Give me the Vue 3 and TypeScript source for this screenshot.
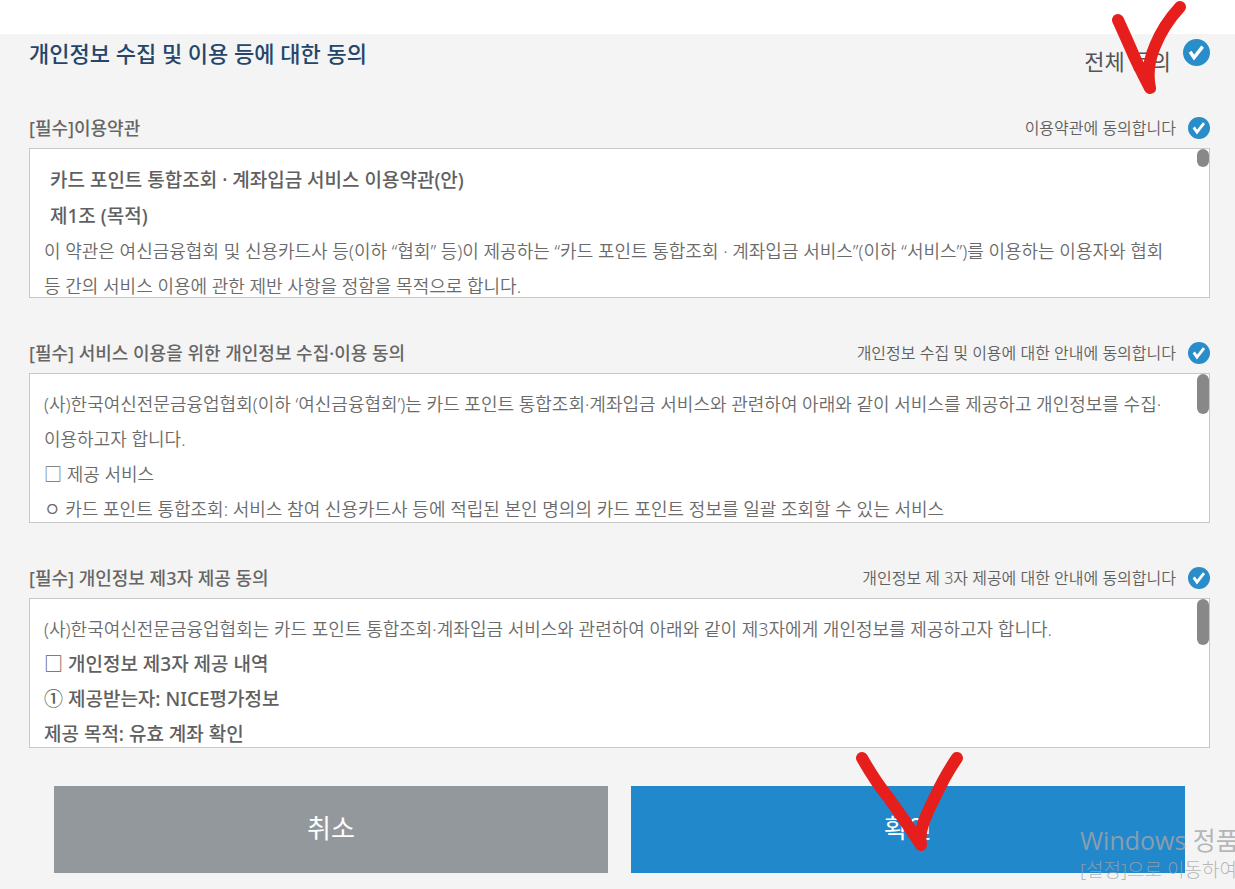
<script setup lang="ts">
import { computed, ref } from 'vue'

interface Line {
  text: string
  kind?: 'strong' | 'heading'
}

interface Section {
  id: string
  title: string
  consent: string
  thumb: number
  agreed: boolean
  lines: Line[]
}

const sections = ref<Section[]>([
  {
    id: 'terms',
    title: '[필수]이용약관',
    consent: '이용약관에 동의합니다',
    thumb: 18,
    agreed: true,
    lines: [
      { text: '카드 포인트 통합조회 · 계좌입금 서비스 이용약관(안)', kind: 'heading' },
      { text: '제1조 (목적)', kind: 'heading' },
      {
        text: '이 약관은 여신금융협회 및 신용카드사 등(이하 “협회” 등)이 제공하는 “카드 포인트 통합조회 · 계좌입금 서비스”(이하 “서비스”)를 이용하는 이용자와 협회 등 간의 서비스 이용에 관한 제반 사항을 정함을 목적으로 합니다.',
      },
    ],
  },
  {
    id: 'collect',
    title: '[필수] 서비스 이용을 위한 개인정보 수집·이용 동의',
    consent: '개인정보 수집 및 이용에 대한 안내에 동의합니다',
    thumb: 40,
    agreed: true,
    lines: [
      {
        text: '(사)한국여신전문금융업협회(이하 ‘여신금융협회’)는 카드 포인트 통합조회·계좌입금 서비스와 관련하여 아래와 같이 서비스를 제공하고 개인정보를 수집·\u200b이용하고자 합니다.',
      },
      { text: '□ 제공 서비스' },
      { text: 'ㅇ 카드 포인트 통합조회: 서비스 참여 신용카드사 등에 적립된 본인 명의의 카드 포인트 정보를 일괄 조회할 수 있는 서비스' },
    ],
  },
  {
    id: 'third',
    title: '[필수] 개인정보 제3자 제공 동의',
    consent: '개인정보 제 3자 제공에 대한 안내에 동의합니다',
    thumb: 46,
    agreed: true,
    lines: [
      { text: '(사)한국여신전문금융업협회는 카드 포인트 통합조회·계좌입금 서비스와 관련하여 아래와 같이 제3자에게 개인정보를 제공하고자 합니다.' },
      { text: '□ 개인정보 제3자 제공 내역', kind: 'strong' },
      { text: '① 제공받는자: NICE평가정보', kind: 'strong' },
      { text: '제공 목적: 유효 계좌 확인', kind: 'strong' },
    ],
  },
])

const allAgreed = computed({
  get: () => sections.value.every((s) => s.agreed),
  set: (value: boolean) => sections.value.forEach((s) => (s.agreed = value)),
})
</script>

<template>
  <div class="page">
    <main class="panel">
      <header class="top">
        <h1>개인정보 수집 및 이용 등에 대한 동의</h1>
        <div class="all">
          <label for="agree-all">전체 동의</label>
          <span class="tick large">
            <input id="agree-all" v-model="allAgreed" type="checkbox" />
            <svg viewBox="0 0 22 22" aria-hidden="true"><path d="M5.8 10.4 9 15.2 16 6.2" /></svg>
          </span>
          <svg class="mark mark-all" viewBox="0 0 80 100" aria-hidden="true">
            <path d="M10 20C15 31 20 42 26 56C31 67 37 78 42 88C39 74 41 60 47 46C53 31 61 19 72 7" />
          </svg>
        </div>
      </header>

      <section v-for="s in sections" :key="s.id" class="section">
        <div class="bar">
          <h2>{{ s.title }}</h2>
          <div class="consent">
            <label :for="s.id">{{ s.consent }}</label>
            <span class="tick">
              <input :id="s.id" v-model="s.agreed" type="checkbox" />
              <svg viewBox="0 0 22 22" aria-hidden="true"><path d="M5.8 10.4 9 15.2 16 6.2" /></svg>
            </span>
          </div>
        </div>
        <div class="box">
          <div class="text">
            <p v-for="line in s.lines" :key="line.text" :class="line.kind">{{ line.text }}</p>
          </div>
          <span class="thumb" :style="{ height: s.thumb + 'px' }"></span>
        </div>
      </section>

      <div class="actions">
        <button type="button" class="cancel">취소</button>
        <button type="button" class="confirm">
          확인
          <svg class="mark mark-confirm" viewBox="0 0 120 110" aria-hidden="true">
            <path d="M14 12C22 26 31 40 40 51C51 66 62 82 73 99C70 85 79 67 86 53C93 38 100 25 109 12" />
          </svg>
        </button>
      </div>
    </main>

    <aside class="watermark">
      <p class="wm-title">Windows 정품</p>
      <p class="wm-sub">[설정]으로 이동하여</p>
    </aside>
  </div>
</template>

<style>
body {
  margin: 0;
  background: #f4f4f4;
}
</style>

<style scoped>
.page {
  position: relative;
  min-height: 100vh;
  box-sizing: border-box;
  overflow: hidden;
  padding-top: 34px;
  background: linear-gradient(#fff 34px, #f4f4f4 34px);
  color: #666;
  font-family: 'Noto Sans', 'Noto Sans CJK KR', sans-serif;
}

.panel {
  padding: 0 25px 16px 29px;
}

h1,
h2,
p {
  margin: 0;
}

.top {
  display: flex;
  justify-content: space-between;
  align-items: flex-start;
  height: 74px;
}

h1 {
  color: #24466b;
  font-size: 22px;
  font-weight: 500;
  line-height: 38px;
}

.all {
  position: relative;
  display: flex;
  gap: 12px;
  padding-top: 5px;
  color: #555;
}

.all label {
  padding-top: 4px;
  font-size: 22px;
  line-height: 36px;
}

.section {
  margin-bottom: 35px;
}

.bar {
  display: flex;
  justify-content: space-between;
  align-items: center;
  height: 40px;
}

h2 {
  font-size: 18px;
  font-weight: 500;
  line-height: 28px;
}

.consent {
  display: flex;
  align-items: center;
  gap: 12px;
  font-size: 16px;
  font-weight: 350;
  line-height: 24px;
  color: #606060;
}

.tick {
  display: grid;
  width: 22px;
  height: 22px;
}

.tick.large {
  width: 27px;
  height: 27px;
}

.tick input,
.tick svg {
  grid-area: 1 / 1;
  width: 100%;
  height: 100%;
  margin: 0;
}

.tick input {
  appearance: none;
  border-radius: 50%;
  background: #ccc;
}

.tick input:checked {
  background: #298dca;
}

.tick svg {
  pointer-events: none;
  fill: none;
  stroke: #fff;
  stroke-width: 2.8;
}

.box {
  position: relative;
  box-sizing: border-box;
  height: 150px;
  overflow: hidden;
  border: 1px solid #c8c8c8;
  background: #fff;
}

.text {
  padding: 13px 32px 0 14px;
  color: #6a6a6a;
  font-size: 18px;
  font-weight: 350;
  line-height: 35px;
  word-break: keep-all;
}

.text .strong,
.text .heading {
  color: #606060;
  font-size: 19px;
  font-weight: 500;
}

.text .heading {
  padding-left: 6px;
  line-height: 36px;
}

.thumb {
  position: absolute;
  top: 0;
  right: 0;
  width: 12px;
  border-radius: 6px;
  background: #888;
}

.actions {
  display: grid;
  grid-template-columns: 1fr 1fr;
  gap: 23px;
  padding: 3px 25px 0;
}

button {
  position: relative;
  height: 87px;
  padding: 0 0 6px;
  border: 0;
  color: #fff;
  font: inherit;
  font-size: 26px;
}

.cancel {
  background: #92989c;
}

.confirm {
  background: #2288cc;
}

.mark {
  position: absolute;
  fill: none;
  stroke: #e61e1c;
  stroke-width: 12;
  stroke-linecap: round;
  stroke-linejoin: round;
  pointer-events: none;
}

.mark-all {
  top: -34px;
  right: 22px;
  width: 80px;
  height: 100px;
}

.mark-confirm {
  top: -40px;
  left: calc(50% - 60px);
  width: 120px;
  height: 110px;
}

.watermark {
  position: absolute;
  left: calc(100% - 155px);
  bottom: 5px;
  width: 200px;
  color: rgba(165, 165, 165, 0.8);
  font-family: 'Open Sans', 'Noto Sans CJK KR', sans-serif;
  font-weight: 400;
  white-space: nowrap;
  pointer-events: none;
}

.wm-title {
  font-size: 25px;
  line-height: 32px;
}

.wm-sub {
  font-size: 19px;
  font-weight: 300;
  line-height: 28px;
}
</style>
